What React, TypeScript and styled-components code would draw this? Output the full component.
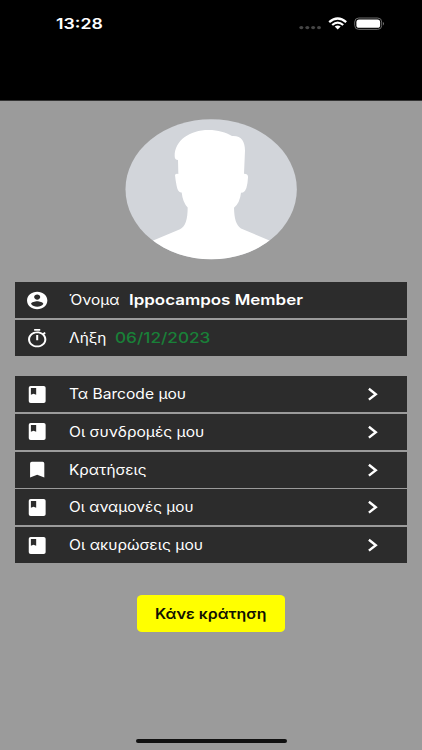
import React from "react";
import styled, { createGlobalStyle } from "styled-components";

const GlobalStyle = createGlobalStyle`
  * { box-sizing: border-box; }
  html, body { margin: 0; padding: 0; background: #9b9b9b; }
  body { font-family: Inter, "Open Sans", sans-serif; overflow: hidden; }
`;

const Screen = styled.main`
  width: 422px;
  height: 750px;
  display: flex;
  flex-direction: column;
  background: #9b9b9b;
  overflow: hidden;
`;

const Header = styled.header`
  flex: none;
  height: 101px;
  background: #000;
  border-bottom: 1px solid #333;
  padding: 14px 37px 0 56px;
  display: flex;
  justify-content: space-between;
  align-items: flex-start;
`;

const Label = styled.span<{ $stretch?: number; $size?: number; $weight?: number; $color?: string }>`
  display: inline-block;
  white-space: nowrap;
  transform: scaleX(${(p) => p.$stretch ?? 1.1});
  transform-origin: left center;
  font-size: ${(p) => p.$size ?? 14}px;
  font-weight: ${(p) => p.$weight ?? 400};
  color: ${(p) => p.$color ?? "#fff"};
  line-height: 20px;
`;

const StatusIcons = styled.div`
  display: flex;
  height: 20px;
`;

const Content = styled.section`
  flex: 1;
  display: flex;
  flex-direction: column;
  align-items: center;
  padding: 18px 15px 0;
`;

const Avatar = styled.svg`
  flex: none;
  width: 172px;
  height: 140.5px;
`;

const List = styled.div<{ $top: number; $gap: number }>`
  width: 392px;
  margin-top: ${(p) => p.$top}px;
  display: flex;
  flex-direction: column;
  gap: ${(p) => p.$gap}px;
`;

const Row = styled.div`
  height: 36px;
  background: #2c2c2c;
  display: grid;
  grid-template-columns: 54.3px 1fr 41px;
  align-items: center;
`;

const IconSlot = styled.div`
  padding-left: 10px;
  display: flex;
`;

const InfoText = styled.div<{ $gap: number }>`
  display: grid;
  grid-template-columns: ${(p) => p.$gap}px 1fr;
`;

const Button = styled.button`
  width: 147.6px;
  height: 36.5px;
  margin-top: 32px;
  padding: 1px 0 0 18px;
  border: 0;
  border-radius: 5px / 4px;
  background: #ffff00;
  text-align: left;
  font-family: inherit;
`;

const HomeIndicator = styled.div`
  flex: none;
  align-self: center;
  width: 151px;
  height: 4px;
  margin-bottom: 7px;
  border-radius: 3px;
  background: #111;
`;

const RowIcon = styled.svg`
  width: 24.4px;
  height: 21px;
  fill: #fff;
`;

const Chevron = () => (
  <svg width="14" height="16" viewBox="0 0 14 16" fill="none" stroke="#fff" strokeWidth="2.4">
    <path d="M2.9 2.8 L9.8 8.2 L2.9 13.6" />
  </svg>
);

const icons: Record<string, string> = {
  person:
    "M12 2C6.48 2 2 6.48 2 12s4.48 10 10 10 10-4.48 10-10S17.52 2 12 2zm0 3c1.66 0 3 1.34 3 3s-1.34 3-3 3-3-1.34-3-3 1.34-3 3-3zm0 14.2c-2.5 0-4.71-1.28-6-3.22.03-1.99 4-3.08 6-3.08 1.99 0 5.97 1.09 6 3.08-1.29 1.94-3.5 3.22-6 3.22z",
  timer:
    "M15 1H9v2h6V1zm-4 13h2V8h-2v6zm8.03-6.61l1.42-1.42c-.43-.51-.9-.99-1.41-1.41l-1.42 1.42C16.07 4.74 14.12 4 12 4c-4.97 0-9 4.03-9 9s4.02 9 9 9 9-4.03 9-9c0-2.12-.74-4.07-1.97-5.61zM12 20c-3.87 0-7-3.13-7-7s3.13-7 7-7 7 3.13 7 7-3.13 7-7 7z",
  book:
    "M5.6 2.3H18.4Q20.3 2.3 20.3 4.2V19.8Q20.3 21.7 18.4 21.7H5.6Q3.7 21.7 3.7 19.8V4.2Q3.7 2.3 5.6 2.3ZM5.8 4.6V12.4L8.4 11L11 12.4V4.6Z",
  bookmark: "M6.7 3H17.3Q19 3 19 5V21L12 18L5 21V5Q5 3 6.7 3Z",
};

const Icon = ({ name }: { name: string }) => (
  <RowIcon viewBox="0 0 24 24" preserveAspectRatio="none">
    <path d={icons[name]} fillRule="evenodd" />
  </RowIcon>
);

const menu = [
  { icon: "book", text: "Τα Barcode μου", stretch: 1.113 },
  { icon: "book", text: "Οι συνδρομές μου", stretch: 1.112 },
  { icon: "bookmark", text: "Κρατήσεις", stretch: 1.1 },
  { icon: "book", text: "Οι αναμονές μου", stretch: 1.093 },
  { icon: "book", text: "Οι ακυρώσεις μου", stretch: 1.115 },
];

export default function App() {
  return (
    <Screen>
      <GlobalStyle />
      <Header>
        <Label $size={15} $weight={600} $stretch={1.18}>13:28</Label>
        <StatusIcons>
          <svg width="88" height="20" viewBox="0 0 88 20">
            <g fill="#464646">
              <ellipse cx="4.3" cy="13.6" rx="2" ry="1.6" />
              <ellipse cx="10.3" cy="13.6" rx="2" ry="1.6" />
              <ellipse cx="16.1" cy="13.6" rx="2" ry="1.6" />
              <ellipse cx="22" cy="13.6" rx="2" ry="1.6" />
            </g>
            <g fill="none" stroke="#fff" strokeWidth="2.3">
              <path d="M32.2 8.2 Q40.7 0.8 49.2 8.2" />
              <path d="M35.2 11 Q40.7 6.2 46.2 11" />
            </g>
            <path d="M37.7 12.6 Q40.7 10.2 43.7 12.6 L40.7 15.4Z" fill="#fff" />
            <rect x="57.7" y="4" width="27" height="11.4" rx="4" fill="none" stroke="#6c6c6c" />
            <rect x="59.4" y="5.6" width="23.7" height="8.2" rx="2.6" fill="#fff" />
            <path d="M86 8 Q88 9.6 86 11.4Z" fill="#777" />
          </svg>
        </StatusIcons>
      </Header>
      <Content>
        <Avatar viewBox="27 27 516 421" preserveAspectRatio="none">
          <defs>
            <clipPath id="oval">
              <ellipse cx="285.5" cy="237.5" rx="257" ry="210" />
            </clipPath>
          </defs>
          <g clipPath="url(#oval)">
            <rect x="27" y="27" width="516" height="421" fill="#d2d5da" />
            <path
              fill="#fff"
              d="M187 192 L186 150 Q176 150 176 138 C176 92 220 60 278 60 C306 60 330 67 348 78 C376 76 387 94 387 122 L384 191 Q397 191 396 202 Q394 242 381 247 L375 248 Q372 278 354 293 C355 326 360 345 375 355 L480 399 V460 H90 V400 L192 357 C208 350 215 328 215 292 Q200 276 197 247 Q186 249 182 228 Q178 208 177 195 Q180 190 187 192Z"
            />
          </g>
        </Avatar>
        <List $top={22.5} $gap={2}>
          <Row>
            <IconSlot><Icon name="person" /></IconSlot>
            <InfoText $gap={59.6}>
              <Label>Όνομα</Label>
              <Label $weight={600} $size={14.5} $stretch={1.169}>Ippocampos Member</Label>
            </InfoText>
          </Row>
          <Row>
            <IconSlot><Icon name="timer" /></IconSlot>
            <InfoText $gap={45.7}>
              <Label>Λήξη</Label>
              <Label $weight={500} $size={14.5} $stretch={1.185} $color="#198038">06/12/2023</Label>
            </InfoText>
          </Row>
        </List>
        <List $top={20.1} $gap={1.75}>
          {menu.map((m) => (
            <Row key={m.text}>
              <IconSlot><Icon name={m.icon} /></IconSlot>
              <Label $stretch={m.stretch}>{m.text}</Label>
              <Chevron />
            </Row>
          ))}
        </List>
        <Button>
          <Label $weight={600} $color="#111100" $stretch={1.135}>Κάνε κράτηση</Label>
        </Button>
      </Content>
      <HomeIndicator />
    </Screen>
  );
}
